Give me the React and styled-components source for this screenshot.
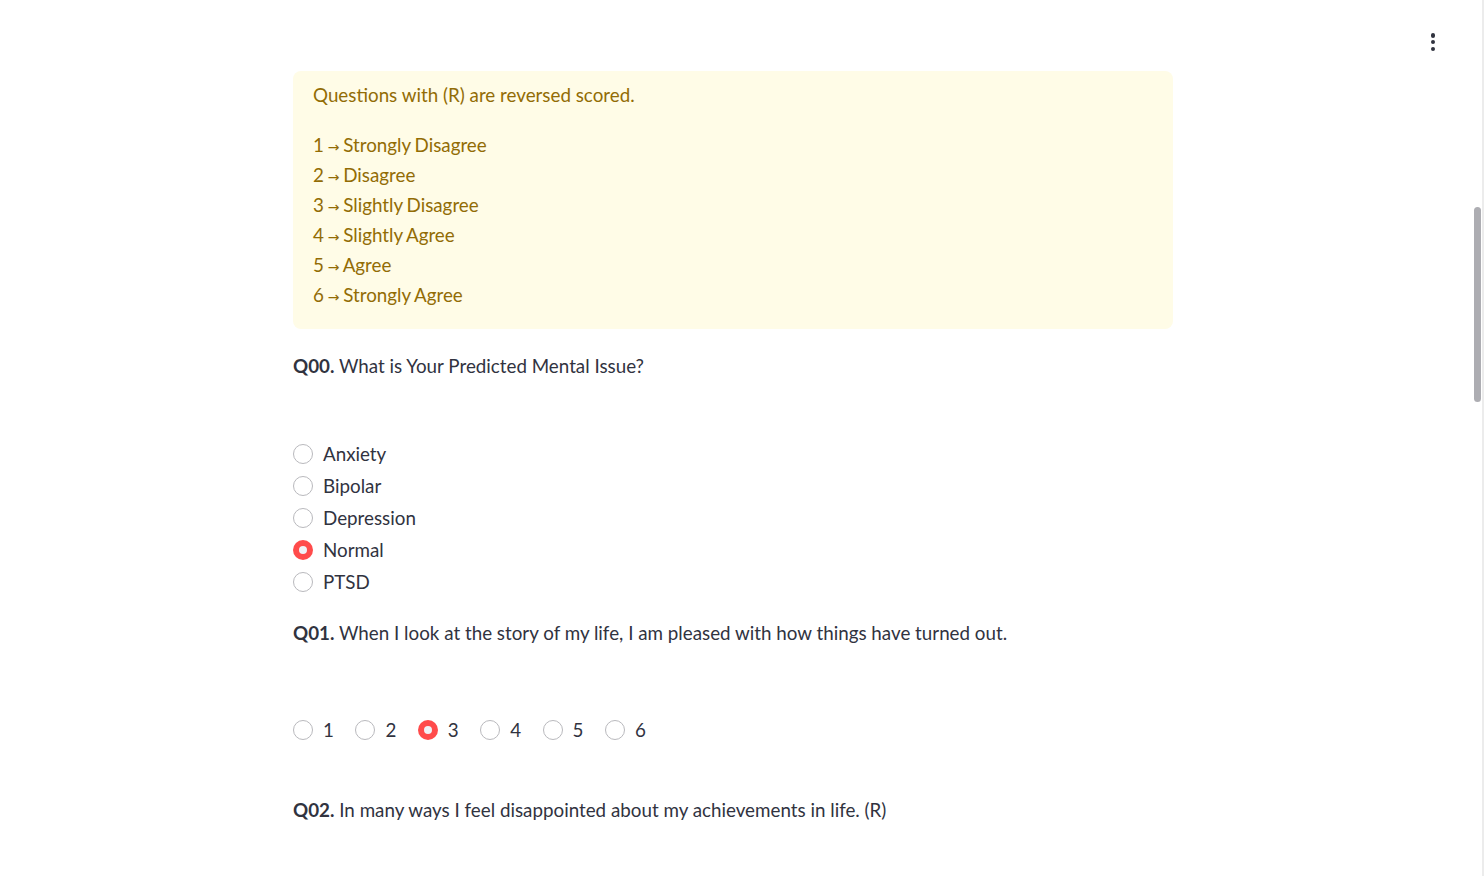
import styled, { createGlobalStyle } from "styled-components";

const GlobalStyle = createGlobalStyle`
    body {
        margin: 0;
        background: #ffffff;
        font-family: Lato, "Noto Sans", sans-serif;
        color: #31333F;
        overflow: hidden;
    }
`

const legend = [
    "Strongly Disagree",
    "Disagree",
    "Slightly Disagree",
    "Slightly Agree",
    "Agree",
    "Strongly Agree",
];

const issues = ["Anxiety", "Bipolar", "Depression", "Normal", "PTSD"];

export default function App() {
    return (
        <>
            <GlobalStyle />
            <Page>
                <Block>
                    <Alert>
                        <AlertIntro>Questions with (R) are reversed scored.</AlertIntro>
                        {legend.map((text, i) => (
                            <AlertLine key={text}>{i + 1} <Arrow>→</Arrow> {text}</AlertLine>
                        ))}
                    </Alert>

                    <Question top={22}><b>Q00.</b> What is Your Predicted Mental Issue?</Question>
                    <RadioGroup top={57}>
                        {issues.map((name) => (
                            <Option key={name}>
                                <Circle checked={name === "Normal"} />
                                <span>{name}</span>
                            </Option>
                        ))}
                    </RadioGroup>

                    <Question top={20}><b>Q01.</b> When I look at the story of my life, I am pleased with how things have turned out.</Question>
                    <RadioGroup top={66} horizontal>
                        {[1, 2, 3, 4, 5, 6].map((n) => (
                            <Option key={n} horizontal>
                                <Circle checked={n === 3} />
                                <span>{n}</span>
                            </Option>
                        ))}
                    </RadioGroup>

                    <Question top={49}><b>Q02.</b> In many ways I feel disappointed about my achievements in life. (R)</Question>
                </Block>
            </Page>
            <MenuButton>
                <Dot /><Dot /><Dot />
            </MenuButton>
            <ScrollTrack>
                <ScrollThumb />
            </ScrollTrack>
        </>
    );
}

const Page = styled.main`
    display: flex;
    justify-content: center;
    padding: 71px 18px 0 0;
    height: 876px;
    box-sizing: border-box;
`
const Block = styled.div`
    width: 880px;
    display: flex;
    flex-direction: column;
    font-size: 18.8px;
    line-height: 30px;
`
const Alert = styled.div`
    background-color: #FFFCE7;
    color: #926C05;
    border-radius: 8px;
    padding: 9px 20px 19px;
`
const AlertIntro = styled.div`
    margin-bottom: 20px;
`
const AlertLine = styled.div`
    height: 30px;
    word-spacing: -1px;
`
const Arrow = styled.span`
    font-family: "DejaVu Sans", sans-serif;
    font-size: 14px;
    line-height: 0;
`
const Question = styled.div`
    margin-top: ${props => props.top}px;
    b {
        font-weight: 700;
    }
`
const RadioGroup = styled.div`
    margin-top: ${props => props.top}px;
    display: flex;
    flex-direction: ${props => props.horizontal ? "row" : "column"};
`
const Option = styled.label`
    display: flex;
    align-items: center;
    gap: 10px;
    height: 32px;
    width: ${props => props.horizontal ? "62.4px" : "auto"};
`
const Circle = styled.span`
    width: 20px;
    height: 20px;
    border-radius: 50%;
    box-sizing: border-box;
    flex-shrink: 0;
    display: flex;
    align-items: center;
    justify-content: center;
    border: ${props => props.checked ? "none" : "1.5px solid #b9b9bd"};
    background: ${props => props.checked ? "#FF4B4B" : "#ffffff"};
    &::after {
        content: "";
        display: ${props => props.checked ? "block" : "none"};
        width: 8px;
        height: 8px;
        border-radius: 50%;
        background: #F0F2F6;
    }
`
const MenuButton = styled.div`
    position: absolute;
    top: 33px;
    left: 1427px;
    width: 12px;
    height: 18px;
    display: flex;
    flex-direction: column;
    align-items: center;
    justify-content: space-between;
`
const Dot = styled.span`
    width: 4.5px;
    height: 4.5px;
    border-radius: 50%;
    background: #31333F;
`
const ScrollTrack = styled.div`
    position: absolute;
    top: 0;
    right: 0;
    width: 12px;
    height: 876px;
    border-right: 2px solid #ececec;
    box-sizing: border-box;
`
const ScrollThumb = styled.div`
    position: absolute;
    top: 207px;
    left: 2px;
    width: 7px;
    height: 195px;
    border-radius: 4px;
    background: #ADADB2;
`
